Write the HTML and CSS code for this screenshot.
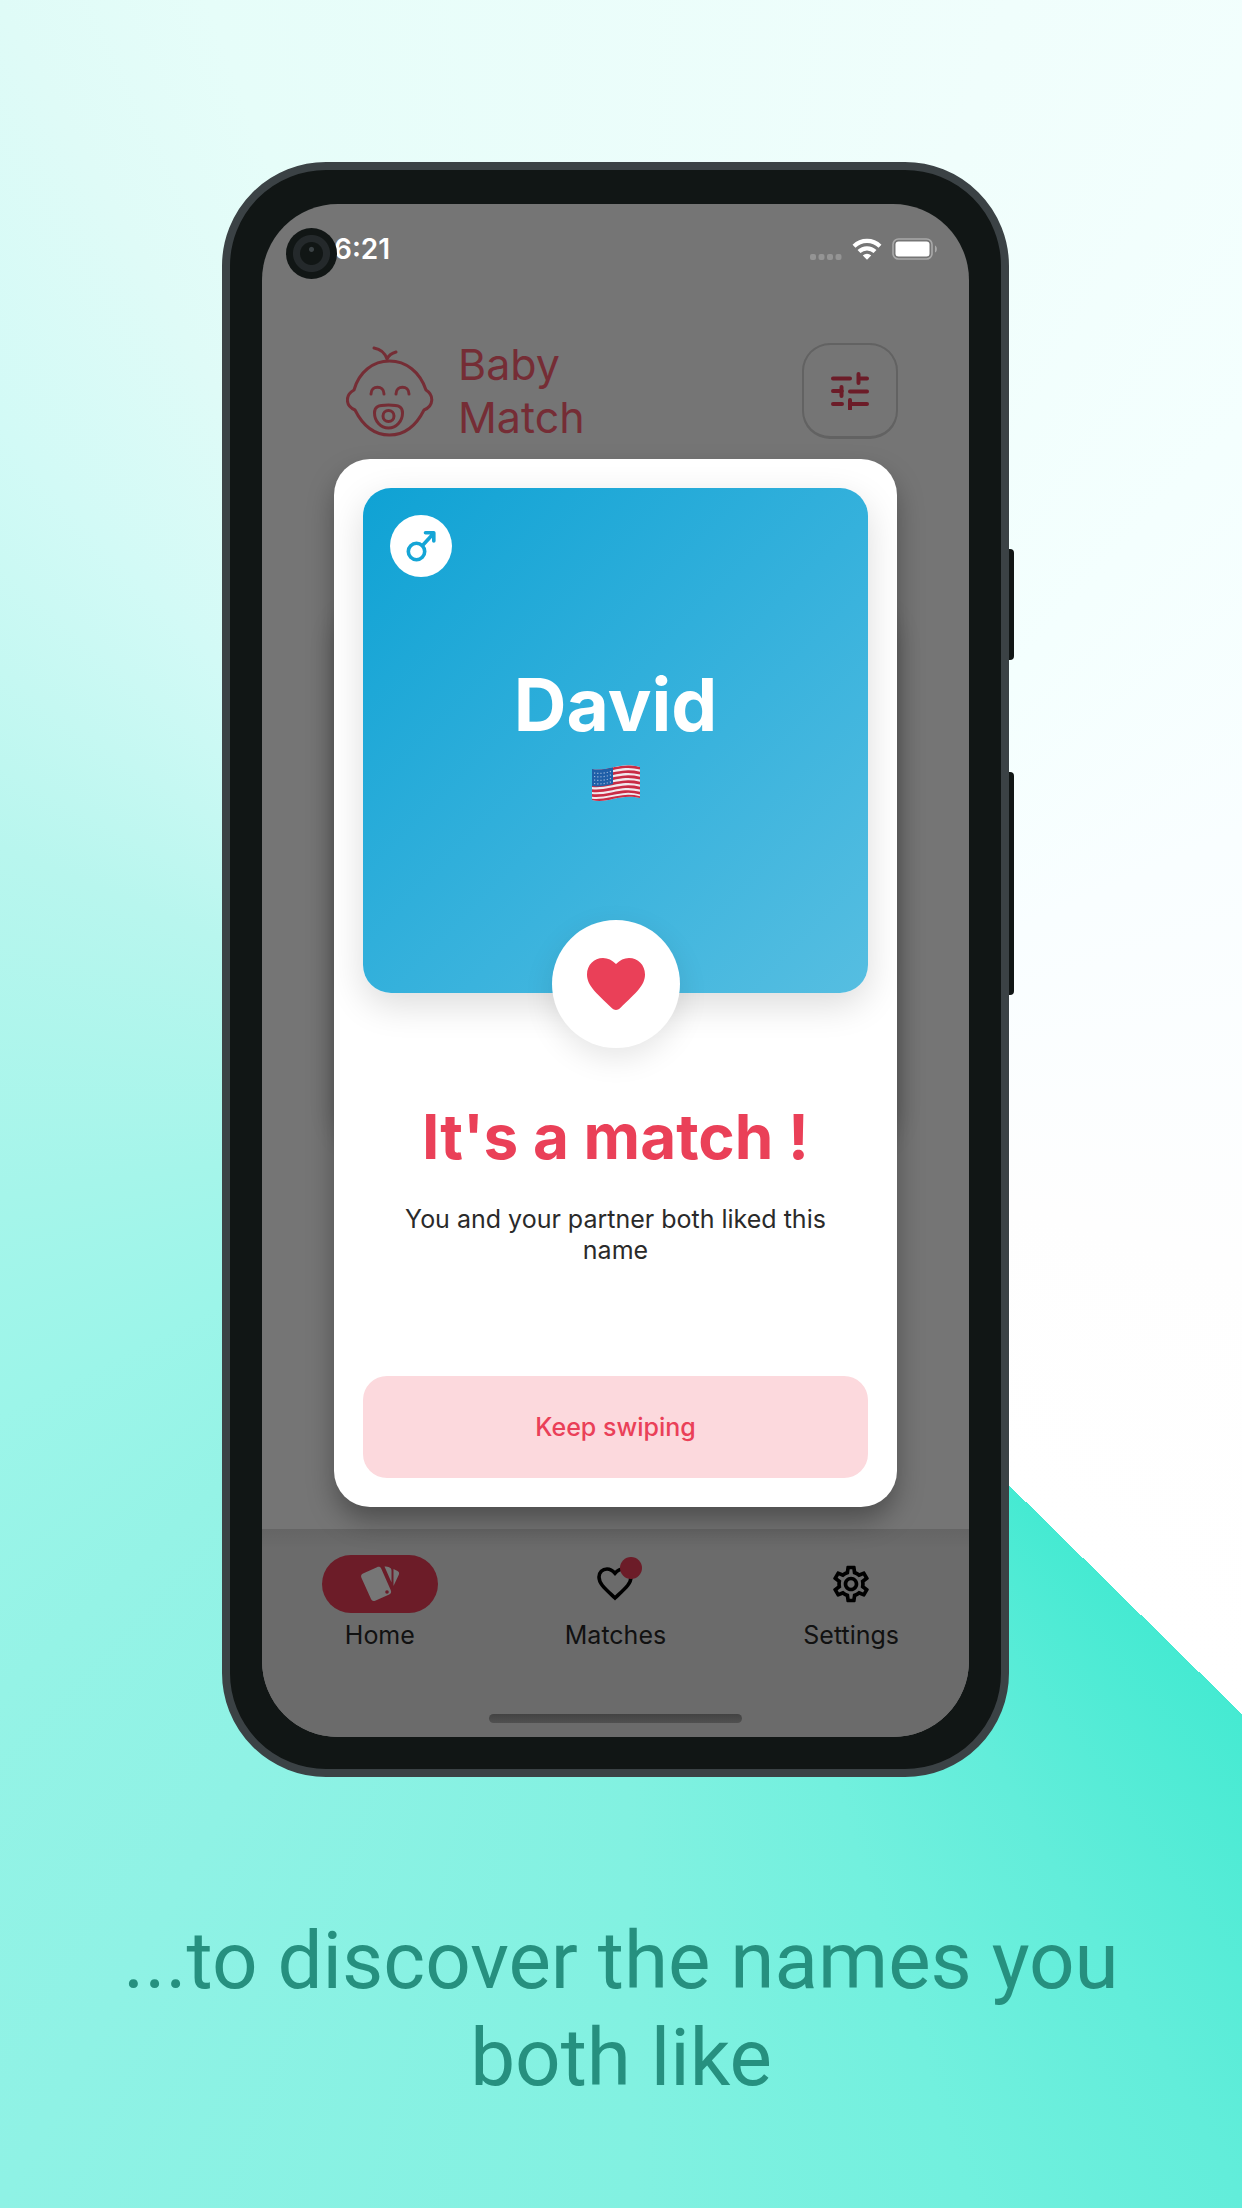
FILE: index.html
```html
<!DOCTYPE html>
<html lang="en">
<head>
<meta charset="utf-8">
<meta name="viewport" content="width=device-width, initial-scale=1">
<title>Baby Match</title>
<link rel="stylesheet" href="styles.css">
</head>
<body>
<main class="poster">
  <div class="phone">
    <span class="side-key side-key-power"></span>
    <span class="side-key side-key-volume"></span>
    <div class="screen">
      <div class="status">
        <span class="camera"></span>
        <span class="time">6:21</span>
        <span class="status-icons">
          <svg width="32" height="6" viewBox="0 0 32 6" fill="#949494" aria-hidden="true"><rect width="6" height="6" rx="2"/><rect x="8.500" width="6" height="6" rx="2"/><rect x="17" width="6" height="6" rx="2"/><rect x="25.500" width="6" height="6" rx="2"/></svg>
          <svg class="wifi" width="30" height="22" viewBox="0 0 30 22" fill="none" stroke="#fff" stroke-width="4.200" aria-hidden="true"><path d="M2 8.200a18.600 18.600 0 0 1 26 0"/><path d="M7 13.600a11.500 11.500 0 0 1 16 0"/><path d="M15 21.700l-4.200-4.200a6 6 0 0 1 8.400 0z" fill="#fff" stroke="none"/></svg>
          <svg class="battery" width="46" height="22" viewBox="0 0 46 22" aria-hidden="true"><rect x="1" y="1" width="39" height="20" rx="5.500" fill="none" stroke="#a9a9a9" stroke-width="1.600"/><rect x="3.500" y="3.500" width="34" height="15" rx="3" fill="#fff"/><path d="M43 7.500c2.500 1 2.500 6 0 7z" fill="#a9a9a9"/></svg>
        </span>
      </div>
      <header class="header">
        <svg class="logo" width="88" height="92" viewBox="0 0 88 92" fill="none" stroke="#752d35" stroke-width="3" stroke-linecap="round" stroke-linejoin="round" aria-hidden="true">
          <path d="M8 45C13 27 27 16 43.500 16S74 27 80 45c8 5 8 16-2 20C70 81 58 90 43.500 90S17 81 9 65C-1 61-1 50 8 45z"/>
          <path d="M28 3c6 1 11 5 13 11 2-4 5-6 9-7"/>
          <path d="M25 49c0-9 13-9 13 0M50 49c0-9 13-9 13 0"/>
          <path d="M42.500 60c11 0 14 2 14 8 0 8-6 15-14 15s-14-7-14-15c0-6 3-8 14-8z"/>
          <circle cx="42.500" cy="71" r="5.500"/>
        </svg>
        <h1 class="brand">Baby Match</h1>
        <button class="filter" type="button" aria-label="Filters">
          <svg width="38" height="38" viewBox="0 0 38 38" stroke="#6c1c28" stroke-width="4" stroke-linecap="round" aria-hidden="true"><path d="M2 6.500h17M27.500 2v9M27.500 6.500h8.500M2 19h9M10.500 15v9M19 19.500h17M2 32h9M19 28v9M19 32h17"/></svg>
        </button>
      </header>
      <section class="match" role="dialog" aria-labelledby="match-title">
        <div class="name-card">
          <span class="gender">
            <svg width="30" height="34" viewBox="0 0 30 34" fill="none" stroke="#15a5d6" stroke-width="3.600" stroke-linecap="round" stroke-linejoin="round" aria-hidden="true"><circle cx="10.500" cy="22.500" r="8.200"/><path d="M16.500 16.500L27.500 4.500M19.500 3.700h8.300V12"/></svg>
          </span>
          <h2 class="name">David</h2>
          <svg class="flag" width="50" height="36" viewBox="0 0 50 36" role="img" aria-label="United States">
            <defs><clipPath id="wave"><path d="M1 4c16 3 28-8 48-2v31c-20-5-32 6-48 2z"/></clipPath></defs>
            <g clip-path="url(#wave)">
              <rect width="50" height="36" fill="#f1e9ee"/>
              <path d="M0 5.500c17 3 29-8 50-2M0 10.500c17 3 29-8 50-2M0 15.500c17 3 29-8 50-2M0 20.500c17 3 29-8 50-2M0 25.500c17 3 29-8 50-2M0 30.300c17 3 29-8 50-2M0 35c17 3 29-8 50-2" fill="none" stroke="#c92c45" stroke-width="2.700"/>
              <path d="M0 3c8 2 14 0 22-2v18c-8 2-14 3-22 2z" fill="#1f5fa8"/>
              <path d="M3 8c6 1 12 0 18-2M3 11.500c6 1 12 0 18-2M3 15c6 1 12 0 18-2M3 18.500c6 1 12 0 18-2" fill="none" stroke="#9db8dc" stroke-width="1.200" stroke-dasharray="1.200 2"/>
            </g>
          </svg>
          <span class="heart">
            <svg width="58" height="52" viewBox="0 0 58 52" fill="#ea4058" aria-hidden="true"><path d="M29 6C33 2 37 0 42 0c9 0 16 7 16 16.500C58 27 50 34 33 50.300c-2.500 2.200-5.500 2.200-8 0C8 34 0 27 0 16.500 0 7 7 0 16 0c5 0 9 2 13 6z"/></svg>
          </span>
        </div>
        <h2 class="title" id="match-title">It's a match !</h2>
        <p class="text">You and your partner both liked this name</p>
        <button class="keep" type="button">Keep swiping</button>
      </section>
      <nav class="tabs">
        <a class="tab" href="#home">
          <span class="tab-icon tab-icon-active">
            <svg width="40" height="36" viewBox="0 0 40 36" fill="#767676" aria-hidden="true"><path d="M3 7.500L17 1.200c2-.8 3.500-.2 4.300 1.600l9.500 21.500c.8 2 .2 3.400-1.600 4.200l-14 6.200c-2 .8-3.400.2-4.200-1.600L1.400 11.800C.6 9.800 1.200 8.300 3 7.500z"/><path d="M24.500.500c4 0 7 1 7 4v12zM33.500 3l4 2c1.600.8 2 2.200 1.300 3.700L33.500 20z"/><circle cx="27" cy="26" r="1.800" fill="#6c1c28"/></svg>
          </span>
          Home
        </a>
        <a class="tab" href="#matches">
          <span class="tab-icon">
            <svg width="36" height="34" viewBox="0 0 36 34" fill="none" stroke="#000" stroke-width="3.600" aria-hidden="true"><path d="M18 6.300C15.500 3.400 13 2 10 2 5.400 2 2 5.500 2 10c0 7 6.500 12 16 21 9.500-9 16-14 16-21 0-4.500-3.400-8-8-8-3 0-5.500 1.400-8 4.300z"/></svg>
            <span class="dot"></span>
          </span>
          Matches
        </a>
        <a class="tab" href="#settings">
          <span class="tab-icon">
            <svg width="44" height="44" viewBox="0 0 24 24" fill="#000" aria-hidden="true"><path d="M19.430 12.980c.04-.32.07-.64.07-.98s-.03-.66-.07-.98l2.110-1.650c.19-.15.24-.42.12-.64l-2-3.460c-.12-.22-.39-.3-.61-.22l-2.490 1c-.52-.4-1.080-.73-1.690-.98l-.38-2.650C14.460 2.180 14.250 2 14 2h-4c-.25 0-.46.18-.49.42l-.38 2.650c-.61.25-1.170.59-1.690.98l-2.490-1c-.23-.09-.49 0-.61.22l-2 3.460c-.13.22-.07.49.12.64l2.110 1.650c-.04.32-.07.65-.07.98s.03.66.07.98l-2.110 1.650c-.19.15-.24.42-.12.64l2 3.460c.12.22.39.3.61.22l2.490-1c.52.4 1.080.73 1.690.98l.38 2.650c.03.24.24.42.49.42h4c.25 0 .46-.18.49-.42l.38-2.650c.61-.25 1.170-.59 1.690-.98l2.490 1c.23.09.49 0 .61-.22l2-3.460c.12-.22.07-.49-.12-.64zm-1.980-1.710c.04.31.05.52.05.73s-.02.43-.05.73l-.14 1.130.89.7 1.080.84-.7 1.210-1.270-.51-1.040-.42-.9.680c-.43.32-.84.56-1.250.73l-1.060.43-.16 1.130-.2 1.350h-1.400l-.35-2.480-1.060-.43c-.43-.18-.83-.41-1.230-.71l-.91-.7-1.060.43-1.270.51-.7-1.210 1.080-.84.89-.7-.14-1.130c-.03-.31-.05-.54-.05-.74s.02-.43.05-.73l.14-1.130-.89-.7-1.080-.84.7-1.210 1.270.51 1.040.42.9-.68c.43-.32.84-.56 1.250-.73l1.060-.43.350-2.480h1.390l.35 2.480 1.060.43c.43.18.83.41 1.230.71l.91.7 1.060-.43 1.270-.51.7 1.210-1.070.85-.89.7zM12 8c-2.210 0-4 1.790-4 4s1.790 4 4 4 4-1.790 4-4-1.790-4-4-4zm0 6c-1.100 0-2-.9-2-2s.9-2 2-2 2 .9 2 2-.9 2-2 2z"/></svg>
          </span>
          Settings
        </a>
      </nav>
      <div class="home-area">
        <span class="home-bar"></span>
      </div>
    </div>
  </div>
  <p class="caption">...to discover the names you both like</p>
</main>
</body>
</html>
```
FILE: styles.css
```css
* {
  box-sizing: border-box;
}

body {
  margin: 0;
  font-family: Inter, "Liberation Sans", sans-serif;
}

h1,
h2,
p {
  margin: 0;
}

button {
  border: 0;
  font: inherit;
  cursor: pointer;
}

.poster {
  display: flex;
  flex-direction: column;
  align-items: center;
  min-height: 100vh;
  padding: 162px 100px 64px;
  background: conic-gradient(from 134.5deg at 50% 50%, #45ead2 0deg, #62edda 16deg, #72f0de 28deg, #82f1e1 45deg, #8ff2e5 75deg, #95f3e6 92deg, #9cf5e9 109deg, #a5f5ea 127deg, #b8f6ee 158deg, #d2faf6 183deg, #dffbf7 196deg, #e6fdf9 205deg, #f0fefc 245deg, #f4fffe 268deg, #f9feff 292deg, #fefefe 330deg, #fff 360deg);
}

.phone {
  position: relative;
  width: 100%;
  max-width: 787px;
  margin-right: 11px;
  padding: 34px 32px 32px;
  border: 8px solid #3b4245;
  border-radius: 104px;
  background: #111615;
}

.side-key {
  position: absolute;
  left: 100%;
  width: 5px;
  margin-left: 8px;
  border-radius: 0 4px 4px 0;
  background: #111615;
}

.side-key-power {
  top: 379px;
  height: 111px;
}

.side-key-volume {
  top: 602px;
  height: 223px;
}

.screen {
  display: flex;
  flex-direction: column;
  isolation: isolate;
  border-radius: 76px;
  background: #757575;
  overflow: hidden;
}

.status {
  position: relative;
  display: flex;
  align-items: center;
  justify-content: space-between;
  height: 90px;
  padding: 0 31px 0 72px;
}

.camera {
  position: absolute;
  left: 24px;
  top: 24px;
  width: 51px;
  height: 51px;
  border-radius: 50%;
  background: radial-gradient(circle at 50% 42%, #3b4245 0 2px, transparent 3px), radial-gradient(circle, #111615 0 11px, #24292b 12px 18px, #111615 19px);
}

.time {
  color: #fff;
  font-size: 28px;
  font-weight: 600;
  line-height: 36px;
}

.status-icons {
  display: flex;
  align-items: flex-end;
  gap: 10px;
}

.header {
  display: flex;
  align-items: center;
  padding: 44px 71px 0 84px;
}

.brand {
  width: 140px;
  margin-left: 24px;
  color: #752d35;
  font-size: 43px;
  font-weight: 400;
  line-height: 53px;
}

.filter {
  display: grid;
  place-items: center;
  width: 96px;
  height: 96px;
  margin-left: auto;
  border: 2px solid #626262;
  border-bottom-width: 3px;
  border-radius: 28px;
  background: transparent;
}

.match {
  position: relative;
  display: flex;
  flex-direction: column;
  margin: 15px 72px 22px;
  padding: 29px;
  border-radius: 36px;
  background: #fff;
  box-shadow: 0 14px 28px -2px rgba(0, 0, 0, 0.36);
}

/* Shadow of the swipe card that sits under the dialog */
.match::before {
  content: "";
  position: absolute;
  z-index: -1;
  inset: 150px 0 370px;
  border-radius: 28px;
  box-shadow: 0 4px 24px rgba(0, 0, 0, 0.2);
}

.name-card {
  position: relative;
  display: flex;
  flex-direction: column;
  align-items: center;
  aspect-ratio: 1;
  padding-top: 174px;
  border-radius: 28px;
  background: linear-gradient(135deg, #0fa2d4, #3ab3dd 60%, #56bee1);
  box-shadow: 0 12px 36px rgba(0, 0, 0, 0.14);
}

.gender,
.heart {
  position: absolute;
  display: grid;
  place-items: center;
  border-radius: 50%;
  background: #fff;
}

.gender {
  left: 27px;
  top: 27px;
  width: 62px;
  height: 62px;
}

.heart {
  left: 50%;
  bottom: -55px;
  width: 128px;
  height: 128px;
  margin-left: -64px;
  box-shadow: 0 10px 30px rgba(0, 0, 0, 0.1);
}

.name {
  color: #fff;
  font-size: 73px;
  font-weight: 700;
  line-height: 86px;
}

.flag {
  margin-top: 17px;
}

.title {
  margin-top: 106px;
  color: #ea4058;
  font-size: 62px;
  font-weight: 700;
  line-height: 76px;
  text-align: center;
}

.text {
  margin: 29px 24px 0;
  color: #2a2a2a;
  font-size: 25px;
  line-height: 31px;
  text-align: center;
}

.keep {
  height: 102px;
  margin-top: 110px;
  border-radius: 24px;
  background: #fcd9dd;
  color: #ea4058;
  font-size: 25px;
  font-weight: 500;
}

.tabs {
  display: grid;
  grid-template-columns: repeat(3, 1fr);
  padding-top: 26px;
  background: linear-gradient(rgba(0, 0, 0, 0.06), rgba(0, 0, 0, 0) 20px) #6b6b6b;
}

.tab {
  display: flex;
  flex-direction: column;
  align-items: center;
  gap: 6px;
  color: #111;
  font-size: 25px;
  line-height: 32px;
  text-decoration: none;
}

.tab-icon {
  position: relative;
  display: grid;
  place-items: center;
  width: 116px;
  height: 58px;
  border-radius: 29px;
}

.tab-icon-active {
  background: #6c1c28;
}

.dot {
  position: absolute;
  right: 31px;
  top: 2px;
  width: 22px;
  height: 22px;
  border-radius: 50%;
  background: #6c1c28;
}

.home-area {
  display: flex;
  justify-content: center;
  padding: 63px 0 14px;
  background: #6b6b6b;
}

.home-bar {
  width: 253px;
  height: 9px;
  border-radius: 5px;
  background: linear-gradient(#434343, #505050);
}

.caption {
  max-width: 1042px;
  margin-top: 136px;
  color: #26907f;
  font-family: Roboto, sans-serif;
  font-size: 80px;
  line-height: 97px;
  text-align: center;
}
```
